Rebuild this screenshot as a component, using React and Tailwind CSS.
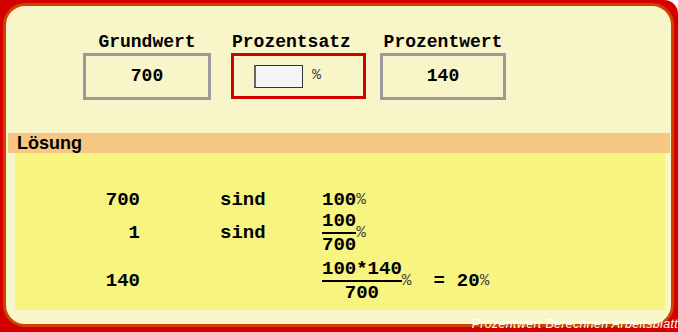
const mono = { fontFamily: '"Liberation Mono", "Courier New", monospace' };

function Frac({ top, bottom }) {
  return (
    <div className="flex flex-col items-center leading-[17px]">
      <div className="border-b-2 border-black pb-[2px]">{top}</div>
      <div className="pt-[3px]">{bottom}</div>
    </div>
  );
}

function Pct() {
  return <span className="text-[16px] font-normal text-[#444]">%</span>;
}

export default function App() {
  return (
    <div className="relative w-[678px] h-[332px] overflow-hidden bg-white" style={mono}>
      <div className="h-full bg-[#d40000] rounded-tr-[14px] pt-[3px] pl-[3px] pr-[4px] pb-[5px]">
        <div className="h-full border-[3px] border-[#cc4400] rounded-[22px] bg-[#f8f6c8] flex flex-col">
          <div className="flex pl-[77px] pt-[26px] text-[18px] text-black">
            <div className="w-[128px] flex flex-col items-center">
              <div className="font-bold leading-[20px]">Grundwert</div>
              <div className="mt-px w-full h-[47px] border-[3px] border-[#9a9a9a] flex items-center justify-center font-bold">
                700
              </div>
            </div>
            <div className="ml-[20px] w-[135px] flex flex-col">
              <div className="font-bold leading-[20px] pl-px">Prozentsatz</div>
              <div className="mt-px w-full h-[46px] border-[3px] border-[#d40000] flex items-center pl-[20px]">
                <input
                  type="text"
                  className="w-[49px] h-[23px] bg-[#f4f4f4] border border-[#333] border-l-2 border-l-[#666] outline-none"
                />
                <span className="ml-[9px] text-[15px] text-[#444]">%</span>
              </div>
            </div>
            <div className="ml-[14px] w-[126px] flex flex-col items-center">
              <div className="font-bold leading-[20px]">Prozentwert</div>
              <div className="mt-px w-full h-[47px] border-[3px] border-[#9a9a9a] flex items-center justify-center font-bold">
                140
              </div>
            </div>
          </div>

          <div
            className="mt-[33px] ml-[2px] mr-[1px] h-[20px] bg-[#f5c782] pl-[9px] text-[18px] font-bold leading-[20px] text-black"
            style={{ fontFamily: '"Liberation Sans", Arial, sans-serif' }}
          >
            Lösung
          </div>

          <div className="ml-[9px] mr-[6px] h-[157px] bg-[#f7f580] pt-[39px] text-[19px] font-bold text-black">
            <div className="flex items-center leading-[17px]">
              <div className="w-[125px] text-right">700</div>
              <div className="ml-[80px] w-[102px]">sind</div>
              <div>100</div>
              <Pct />
            </div>
            <div className="mt-[4px] flex items-center leading-[17px]">
              <div className="w-[125px] text-right">1</div>
              <div className="ml-[80px] w-[102px]">sind</div>
              <Frac top="100" bottom="700" />
              <Pct />
            </div>
            <div className="mt-[7px] flex items-center leading-[17px]">
              <div className="w-[125px] text-right">140</div>
              <div className="ml-[80px] w-[102px]"></div>
              <Frac top="100*140" bottom="700" />
              <Pct />
              <div className="ml-[22px]">=</div>
              <div className="ml-[12px]">20</div>
              <Pct />
            </div>
          </div>
        </div>
      </div>
      <div
        className="absolute right-0 bottom-[1px] text-[12.5px] leading-[14px] italic text-white tracking-[0.3px]"
        style={{ fontFamily: '"Liberation Sans", Arial, sans-serif' }}
      >
        Prozentwert Berechnen Arbeitsblatt
      </div>
    </div>
  );
}
